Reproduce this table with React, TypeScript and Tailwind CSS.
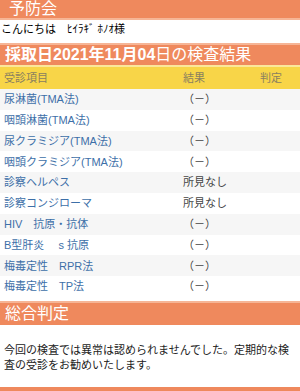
const rows: { name: string; result: string }[] = [
  { name: "尿淋菌(TMA法)", result: "（－）" },
  { name: "咽頭淋菌(TMA法)", result: "（－）" },
  { name: "尿クラミジア(TMA法)", result: "（－）" },
  { name: "咽頭クラミジア(TMA法)", result: "（－）" },
  { name: "診察ヘルペス", result: "所見なし" },
  { name: "診察コンジローマ", result: "所見なし" },
  { name: "HIV　抗原・抗体", result: "（－）" },
  { name: "B型肝炎　 s 抗原", result: "（－）" },
  { name: "梅毒定性　RPR法", result: "（－）" },
  { name: "梅毒定性　TP法", result: "（－）" },
];

const font = "font-['Liberation_Sans','Noto_Sans_CJK_JP',sans-serif]";

export default function App() {
  return (
    <div className={`w-[300px] h-[391px] overflow-hidden bg-white ${font}`}>
      <div className="h-[20px] bg-[#ef895d] border-b-2 border-[#f6b596] pl-[9px] text-[16px] leading-[18px] text-white">
        予防会
      </div>
      <div className="h-[23px] pl-[1px] pt-[2px] text-[11px] leading-[15px] text-black">
        こんにちは　ﾋｲﾗｷﾞ ﾎﾉｵ様
      </div>
      <div className="h-[22px] bg-[#ef895d] border-t-2 border-[#f6b596] pl-[5px] text-[16px] leading-[20px] text-white whitespace-nowrap">
        <span className="font-bold">採取日2021年11月04</span>日の検査結果
      </div>
      <div className="border-t-2 border-[#fbe79a] bg-[#f8d548] h-[24px] grid grid-cols-[183px_77px_1fr] items-center text-[11px] text-[#8a8060]">
        <span className="pl-[4px]">受診項目</span>
        <span>結果</span>
        <span>判定</span>
      </div>
      {rows.map((r, i) => (
        <div
          key={r.name}
          className={`h-[20.8px] grid grid-cols-[183px_77px_1fr] items-center text-[11px] ${
            i % 2 === 0 ? "bg-[#f6f6f6]" : "bg-white"
          }`}
        >
          <span className="pl-[4px] text-[#3d6fa8] whitespace-nowrap">{r.name}</span>
          <span className="text-[#444]">{r.result}</span>
          <span />
        </div>
      ))}
      <div className="mt-[4px] h-[24px] bg-[#ef895d] border-t-2 border-[#f6b596] pl-[5px] text-[16px] leading-[22px] text-white">
        総合判定
      </div>
      <p className="pt-[18px] pl-[4px] pr-[6px] pb-[14px] text-[11px] leading-[15px] text-[#222] border-b-4 border-[#ef895d]">
        今回の検査では異常は認められませんでした。定期的な検査の受診をお勧めいたします。
      </p>
    </div>
  );
}
